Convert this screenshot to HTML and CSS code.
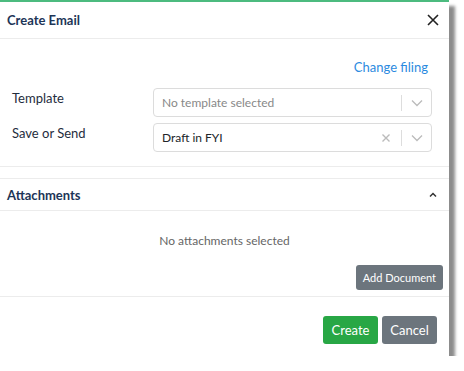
FILE: index.html
```html
<!DOCTYPE html>
<html lang="en">
<head>
    <meta charset="UTF-8">
    <title>Create Email</title>
    <link rel="stylesheet" href="styles.css">
</head>
<body>
    <div class="dialog">
        <div class="dialog-header">
            <h2>Create Email</h2>
            <svg class="close" width="12" height="12" viewBox="0 0 12 12"><path d="M1 1l10 10M11 1L1 11" stroke="#222" stroke-width="1.6"/></svg>
        </div>
        <div class="card form-card">
            <div class="filing-row"><a href="#">Change filing</a></div>
            <div class="field-row">
                <label>Template</label>
                <div class="select">
                    <span class="placeholder">No template selected</span>
                    <span class="indicators">
                        <span class="sep"></span>
                        <svg class="chevron" width="12" height="8" viewBox="0 0 12 8"><path d="M1 1.5l5 5 5-5" fill="none" stroke="#bbb" stroke-width="1.3"/></svg>
                    </span>
                </div>
            </div>
            <div class="field-row">
                <label>Save or Send</label>
                <div class="select">
                    <span class="value">Draft in FYI</span>
                    <span class="indicators">
                        <svg class="clear" width="10" height="10" viewBox="0 0 10 10"><path d="M1.5 1.5l7 7M8.5 1.5l-7 7" stroke="#bbb" stroke-width="1.4"/></svg>
                        <span class="sep"></span>
                        <svg class="chevron" width="12" height="8" viewBox="0 0 12 8"><path d="M1 1.5l5 5 5-5" fill="none" stroke="#bbb" stroke-width="1.3"/></svg>
                    </span>
                </div>
            </div>
        </div>
        <div class="card attach-card">
            <div class="attach-header">
                <h3>Attachments</h3>
                <svg width="8" height="6" viewBox="0 0 8 6"><path d="M1 4.5l3-3 3 3" fill="none" stroke="#333" stroke-width="1.5"/></svg>
            </div>
            <div class="attach-body">
                <p>No attachments selected</p>
                <div class="attach-actions"><button class="btn btn-gray">Add Document</button></div>
            </div>
        </div>
        <div class="dialog-footer">
            <button class="btn btn-green">Create</button>
            <button class="btn btn-gray">Cancel</button>
        </div>
    </div>
</body>
</html>
```

FILE: styles.css
```css
body {
    margin: 0;
    background-color: #fff;
    font-family: Lato, "Open Sans", sans-serif;
    font-size: 13px;
    color: #212529;
}
.dialog {
    width: 449px;
    height: 354px;
    border-top: 2px solid #4cbb7f;
    background-color: #fff;
    box-shadow: 6px 6px 3px rgba(0, 0, 0, 0.45);
    display: flex;
    flex-direction: column;
}
.dialog-header {
    height: 36px;
    display: flex;
    align-items: center;
    justify-content: space-between;
    padding: 0 25px 0 7px;
    border-bottom: 1px solid #ececec;
}
.dialog-header h2 {
    margin: 0;
    font-size: 13px;
    font-weight: bold;
    color: #1d3557;
}
.close {
    margin-right: -15px;
}
.card {
    border-bottom: 1px solid #ececec;
}
.form-card {
    height: 127px;
    padding: 0 17px 0 12px;
    margin-bottom: 11px;
}
.filing-row {
    display: flex;
    justify-content: flex-end;
    padding: 20px 4px 0 0;
    height: 29px;
}
.filing-row a {
    color: #2b8ae0;
    text-decoration: none;
}
.field-row {
    display: flex;
    align-items: flex-start;
    margin-bottom: 6px;
}
.field-row label {
    width: 141px;
    padding-top: 2px;
    color: #1f2d3d;
}
.select {
    flex: 1;
    height: 27px;
    border: 1px solid #dcdcdc;
    border-radius: 4px;
    display: flex;
    align-items: center;
    justify-content: space-between;
    padding-left: 8px;
    font-size: 12px;
}
.placeholder {
    color: #888;
}
.indicators {
    display: flex;
    align-items: center;
}
.clear {
    margin-right: 10px;
}
.sep {
    width: 1px;
    height: 16px;
    background-color: #ddd;
}
.chevron {
    margin: 0 8px 0 9px;
}
.attach-card {
    border-top: 1px solid #ececec;
}
.attach-header {
    height: 31px;
    display: flex;
    align-items: center;
    justify-content: space-between;
    padding: 0 12px 0 7px;
    border-bottom: 1px solid #ececec;
}
.attach-header h3 {
    margin: 0;
    font-size: 13px;
    font-weight: bold;
    color: #1d3557;
}
.attach-body {
    height: 85px;
}
.attach-body p {
    margin: 0;
    padding-top: 22px;
    text-align: center;
    font-size: 12px;
    color: #666;
}
.attach-actions {
    display: flex;
    justify-content: flex-end;
    padding: 17px 6px 0 0;
}
.btn {
    border: none;
    border-radius: 3px;
    color: #fff;
    font-family: inherit;
    font-size: 13px;
    cursor: pointer;
}
.attach-actions .btn {
    height: 25px;
    padding: 0 7px;
    font-size: 11px;
}
.btn-gray {
    background-color: #6c757d;
}
.btn-green {
    background-color: #28a745;
}
.dialog-footer {
    display: flex;
    justify-content: flex-end;
    gap: 4px;
    padding: 19px 12px 0 0;
}
.dialog-footer .btn {
    width: 55px;
    height: 28px;
    font-size: 13px;
}
```
